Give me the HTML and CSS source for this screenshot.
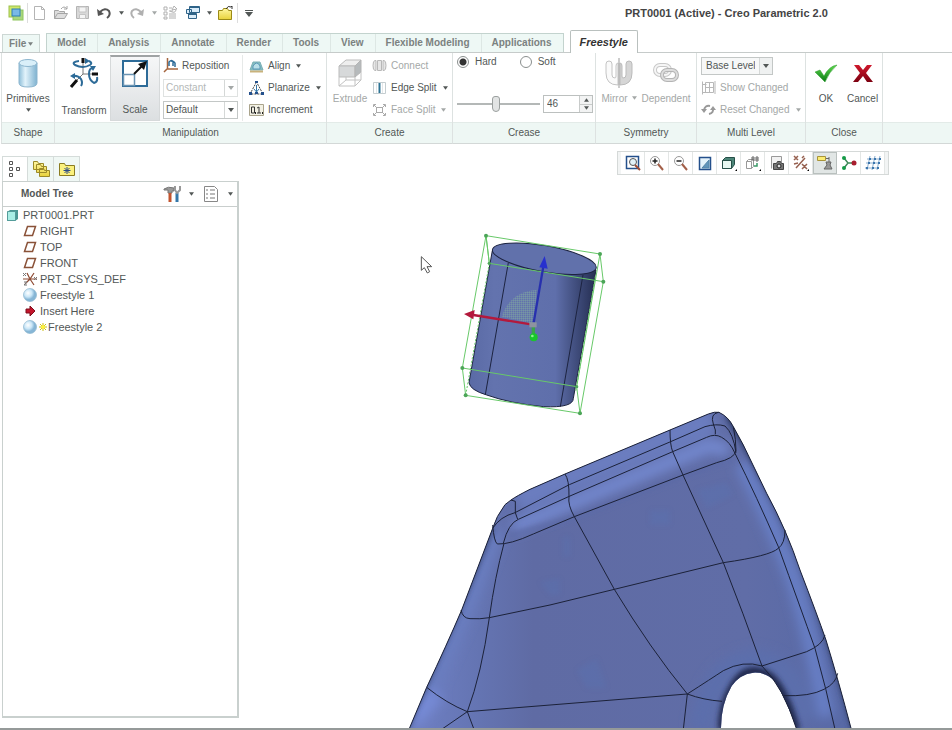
FILE: index.html
```html
<!DOCTYPE html>
<html lang="en">
<head>
<meta charset="utf-8">
<title>PRT0001 (Active) - Creo Parametric 2.0</title>
<link rel="stylesheet" href="styles.css">
</head>
<body>
<svg class="defs" aria-hidden="true">
  <defs>
    <linearGradient id="glass"><stop offset="0" stop-color="#8fbfd9"/><stop offset=".35" stop-color="#e2f3fb"/><stop offset="1" stop-color="#7fb2d0"/></linearGradient>
    <radialGradient id="ball" cx=".35" cy=".35"><stop offset="0" stop-color="#fff"/><stop offset=".6" stop-color="#c9e6f7"/><stop offset="1" stop-color="#86b6d6"/></radialGradient>
    <linearGradient id="folder" x2="0" y2="1"><stop offset="0" stop-color="#fff7a0"/><stop offset="1" stop-color="#e8d23c"/></linearGradient>
    <linearGradient id="tick" x2="0" y2="1"><stop offset="0" stop-color="#5fd84e"/><stop offset="1" stop-color="#087a12"/></linearGradient>
    <linearGradient id="cross" x2="0" y2="1"><stop offset="0" stop-color="#d0182c"/><stop offset="1" stop-color="#7c0010"/></linearGradient>
    <symbol id="caret" viewBox="0 0 6 4"><path d="M0 0h6L3 4z" fill="currentColor"/></symbol>
    <symbol id="plane" viewBox="0 0 14 12"><path d="M4.500 1.500h8l-3 9h-8z" fill="#fff" stroke="#8a5238" stroke-width="1.500"/></symbol>
    <symbol id="sphere" viewBox="0 0 14 14"><circle cx="7" cy="7" r="6.500" fill="url(#ball)" stroke="#8db6cf" stroke-width=".7"/></symbol>
  </defs>
</svg>

<header class="titlebar">
  <nav class="quick" aria-label="Quick access">
    <button aria-label="Application"><svg class="i16" viewBox="0 0 16 16"><rect x="1" y="1" width="11" height="11" fill="#cfe86a" stroke="#9cc04a"/><rect x="5" y="5" width="10" height="10" fill="#a9d77c" stroke="#8fc65f"/><rect x="4" y="4" width="8" height="7" fill="#79b9e6" stroke="#2f7fb4"/></svg></button>
    <i class="rule"></i>
    <button aria-label="New"><svg class="i16" viewBox="0 0 16 16"><path d="M3.500 1.500h7l3 3v10h-10zM10.500 1.500v3h3" fill="#fff" stroke="#b4b4b4"/></svg></button>
    <button aria-label="Open"><svg class="i16" viewBox="0 0 16 16"><path d="M1.500 13.500v-8h4l1 1h5v2M1.500 13.500l3-5h10l-3 5z" fill="#ddd" stroke="#a5a5a5"/><path d="M8 4q3-4 6 0m0-3v3h-3" fill="none" stroke="#a5a5a5"/></svg></button>
    <button aria-label="Save"><svg class="i16" viewBox="0 0 16 16"><path d="M1.500 1.500h12v12h-12z" fill="#d8d8d8" stroke="#b4b4b4"/><path d="M4 2h7v5H4zM4.500 9.500h6v4h-6z" fill="#f4f4f4" stroke="#c4c4c4"/></svg></button>
    <button aria-label="Undo"><svg class="i16" viewBox="0 0 16 16"><path d="M3 7q5-5 9-1 2 4-2 7" fill="none" stroke="#555" stroke-width="2"/><path d="M0 4l1 7 6-2z" fill="#555"/></svg></button>
    <button aria-label="Undo list"><svg class="caret q"><use href="#caret"/></svg></button>
    <button aria-label="Redo"><svg class="i16" viewBox="0 0 16 16"><path d="M11 7Q6 2 2 6q-2 4 2 7" fill="none" stroke="#b0b0b0" stroke-width="2"/><path d="M14 4l-1 7-6-2z" fill="#b0b0b0"/></svg></button>
    <button aria-label="Redo list" class="off"><svg class="caret q"><use href="#caret"/></svg></button>
    <button aria-label="Regenerate"><svg class="i16" viewBox="0 0 16 16"><path d="M1 2h3v3H1zM1 7h3v3H1zM1 12h3v2H1zM6 9h7M6 11h7M6 13h7M6 3h3M7 6q5 3 6-1M6 6h4M11 1l3 3-5 1z" fill="none" stroke="#b0b0b0"/></svg></button>
    <button aria-label="Windows"><svg class="i16" viewBox="0 0 16 16"><path d="M4.500 1.500h10v6h-10zM1.500 4.500h5v4h-5zM3.500 8.500h8v5h-8z" fill="#d9ecfa" stroke="#2e6388"/><path d="M4 2.500h11M3 9.500h9" stroke="#2e6388"/></svg></button>
    <button aria-label="Windows list"><svg class="caret q"><use href="#caret"/></svg></button>
    <button aria-label="Close"><svg class="i16" viewBox="0 0 16 16"><path d="M.5 14.500v-9h4l1-2h4l1 2h3v9z" fill="url(#folder)" stroke="#9b8a16"/><path d="M8 4q2-4 5-2l1-1v3" fill="none" stroke="#333"/></svg></button>
    <i class="rule"></i>
    <button aria-label="Customize" class="more"><svg class="caret w" viewBox="0 0 8 7"><path d="M0 0h8v1H0zM0 2h8L4 7z" fill="currentColor"/></svg></button>
  </nav>
  <h1>PRT0001 (Active) - Creo Parametric 2.0</h1>
</header>

<nav class="tabs" aria-label="Ribbon tabs">
  <button class="file">File <svg class="caret q"><use href="#caret"/></svg></button>
  <div class="tabset">
    <button>Model</button><button>Analysis</button><button>Annotate</button><button>Render</button><button>Tools</button><button>View</button><button>Flexible Modeling</button><button>Applications</button>
  </div>
  <button class="current">Freestyle</button>
</nav>

<main class="ribbon">
  <section class="group">
    <div class="tools center">
      <button class="big"><svg class="i30" viewBox="0 0 30 30"><path d="M6 5v20q0 4 9 4t9-4V5" fill="url(#glass)" stroke="#8db6cf"/><ellipse cx="15" cy="5" rx="9" ry="3.500" fill="#d9eff9" stroke="#8db6cf"/></svg><span>Primitives</span><svg class="caret q"><use href="#caret"/></svg></button>
    </div>
    <h2>Shape</h2>
  </section>

  <section class="group">
    <div class="tools">
      <button class="big low wide"><svg class="i30" viewBox="0 0 30 30"><path d="M14 3v13h13M14 16l-9 9" fill="none" stroke="#777"/><path d="M14 0v5M23 16h6M8 22l-6 7" stroke="#111" stroke-width="3"/><path d="M10 3q-8 1-4 4 8 4 15 0 3-2-1-4M24 10q-4 0-4 6t5 9q4-1 3-6M3 18q6-1 9 3 2 4 0 7" fill="none" stroke="#2d6b98" stroke-width="2"/><path d="M16 0l5 3-5 3zM21 8h6l-3 5zM1 18l5-3v6z" fill="#2d6b98"/></svg><span>Transform</span></button>
      <button class="big low pressed"><svg class="i30" viewBox="0 0 30 30"><path d="M3 3h24v25H3z" fill="#fff" stroke="#2d6b98" stroke-width="2"/><path d="M3.500 16.500h11v11h-11z" fill="#fff" stroke="#6b94b3" stroke-width="1.500"/><path d="M14 16l9-9" stroke="#111" stroke-width="2"/><path d="M27 3l-9 3 6 6z" fill="#111"/></svg><span>Scale</span></button>
      <div class="stack combos">
        <button class="row"><svg class="i16" viewBox="0 0 16 16"><path d="M4.500 0v11H15M4 11l-3 3" fill="none" stroke="#a5653e" stroke-width="1.500"/><path d="M6 8V4q3-3 4 0v4M12 9V5q-1-2-4-2" fill="none" stroke="#2d6b98" stroke-width="1.500"/></svg>Reposition</button>
        <span class="combo off"><select aria-label="Transform mode" disabled><option>Constant</option></select><svg class="caret"><use href="#caret"/></svg></span>
        <span class="combo"><select aria-label="Increment mode"><option>Default</option></select><svg class="caret"><use href="#caret"/></svg></span>
      </div>
      <div class="stack divided">
        <button class="row"><svg class="i16" viewBox="0 0 16 16"><path d="M1 12l3-8h7l3 8z" fill="#86bfc0" stroke="#7bafb6"/><path d="M4 8q4-6 7 0v3H4z" fill="#b9dfe8" stroke="#5b97b8"/><path d="M1 13.500h13" stroke="#c9b27c" stroke-width="2"/></svg>Align <svg class="caret q gap"><use href="#caret"/></svg></button>
        <button class="row"><svg class="i16" viewBox="0 0 16 16"><path d="M7.500 2L1 14h13z" fill="none" stroke="#444" stroke-dasharray="2 1"/><path d="M7.500 5v7M5 9l2.500 3L10 9" fill="none" stroke="#3477a8"/><path d="M6 1h3v2H6zM0 12h3v3H0zM12 12h3v3h-3zM6 12h3v2H6z" fill="#24508c"/></svg>Planarize <svg class="caret q gap"><use href="#caret"/></svg></button>
        <button class="row"><svg class="i16" viewBox="0 0 16 16"><path d="M.5 2.500h14v11H.5z" fill="#f3f1e4" stroke="#aaa48c"/><path d="M2.500 5h3v6h-3zM8 6l2-1v6M8 11h4" fill="none" stroke="#333"/><path d="M6 10h1v2H6zM13 10h1v2h-1z" fill="#222"/></svg>Increment</button>
      </div>
    </div>
    <h2>Manipulation</h2>
  </section>

  <section class="group">
    <div class="tools">
      <button class="big off extrude" disabled><svg class="i30" viewBox="0 0 30 30"><path d="M4 8l7-6h15l-6 6z" fill="#eee" stroke="#bbb"/><path d="M4 8h16v11H4z" fill="#d7d9da" stroke="#bbb"/><path d="M20 8l6-6v12l-6 5z" fill="#b6babc" stroke="#b4b4b4"/><path d="M4 19v9h16v-9M20 28l6-6v-8M4 28l7-6h15M11 22v-3" fill="none" stroke="#c2c2c2"/></svg><span>Extrude</span></button>
      <div class="stack inset">
        <button class="row off" disabled><svg class="i16" viewBox="0 0 16 16"><path d="M4 2.500H3q-2 0-2 5t2 5h1zM11 2.500h1q2 0 2 5t-2 5h-1zM5.500 2.500h4v10h-4z" fill="#e6e6e6" stroke="#b8b8b8"/></svg>Connect</button>
        <button class="row"><svg class="i16" viewBox="0 0 16 16"><path d="M1.500 2.500h12v11h-12z" fill="#fff" stroke="#c4cdd0"/><path d="M4.500 3v10M10.500 3v10" stroke="#e3e7e9"/><path d="M7.500 3v10" stroke="#2d7394" stroke-width="2"/></svg>Edge Split <svg class="caret q gap"><use href="#caret"/></svg></button>
        <button class="row off" disabled><svg class="i16" viewBox="0 0 16 16"><path d="M4.500 5.500h6v5h-6zM2 3l3 3M13 3l-3 3M2 13l3-3M13 13l-3-3M1.500 5V2.500H4M11 2.500h2.500V5M1.500 11v2.500H4M11 13.500h2.500V11" fill="none" stroke="#aaa"/></svg>Face Split <svg class="caret q gap"><use href="#caret"/></svg></button>
      </div>
    </div>
    <h2>Create</h2>
  </section>

  <section class="group">
    <div class="tools crease">
      <div class="radios"><label><input type="radio" name="crease" checked>Hard</label><label><input type="radio" name="crease">Soft</label></div>
      <div class="amount">
        <input type="range" aria-label="Crease amount" min="0" max="100" value="46">
        <span class="spin"><input type="text" aria-label="Crease value" value="46"><span class="steps"><button aria-label="Increase"><svg class="caret tiny flip"><use href="#caret"/></svg></button><button aria-label="Decrease"><svg class="caret tiny"><use href="#caret"/></svg></button></span></span>
      </div>
    </div>
    <h2>Crease</h2>
  </section>

  <section class="group">
    <div class="tools pair">
      <button class="big off" disabled><svg class="i30" viewBox="0 0 30 30"><path d="M14 21v6Q2 27 2 15V6q0-3 3-3t3 3v11q0 3 3 3 1 0 1-2V8q0-3 2-3z" fill="#fafafa" stroke="#c4c4c4"/><path d="M16 21v6q12 0 12-12V6q0-3-3-3t-3 3v11q0 3-3 3-1 0-1-2V8q0-3-2-3z" fill="#d6d6d6" stroke="#bbb"/><path d="M15 0v30" stroke="#999"/></svg><span>Mirror <svg class="caret q"><use href="#caret"/></svg></span></button>
      <button class="big off" disabled><svg class="i30" viewBox="0 0 30 30"><rect x="4" y="7" width="15" height="10" rx="5" fill="none" stroke="#c8c8c8" stroke-width="4"/><rect x="4" y="7" width="15" height="10" rx="5" fill="none" stroke="#f6f6f6" stroke-width="2"/><rect x="11" y="12" width="15" height="10" rx="5" fill="none" stroke="#b4b4b4" stroke-width="4"/><rect x="11" y="12" width="15" height="10" rx="5" fill="none" stroke="#ddd" stroke-width="2"/></svg><span>Dependent</span></button>
    </div>
    <h2>Symmetry</h2>
  </section>

  <section class="group">
    <div class="tools level">
      <div class="stack">
        <span class="combo level-combo"><select aria-label="Level"><option>Base Level</option></select><svg class="caret"><use href="#caret"/></svg></span>
        <button class="row off" disabled><svg class="i16" viewBox="0 0 16 16"><path d="M1.500 1.500v13M1.500 4.500h4M1.500 12.500h4M4.500 2.500h8v10h-8zM4.500 7.500h8M8.500 2.500v10M14 1v13" fill="none" stroke="#b8b8b8"/></svg>Show Changed</button>
        <button class="row off" disabled><svg class="i16" viewBox="0 0 16 16"><path d="M3 8q1-5 6-4M12 6q1 5-4 6" fill="none" stroke="#999" stroke-width="2"/><path d="M0 7h6l-3 4zM15 8H9l3-4z" fill="#999"/></svg>Reset Changed <svg class="caret q gap"><use href="#caret"/></svg></button>
      </div>
    </div>
    <h2>Multi Level</h2>
  </section>

  <section class="group">
    <div class="tools close">
      <button class="big"><svg class="i30" viewBox="0 0 30 30"><path d="M4 14l5-2 4 6Q18 8 26 7 18 14 14 24z" fill="url(#tick)" stroke="#2b9a2b" stroke-width=".5"/></svg><span>OK</span></button>
      <button class="big"><svg class="i30" viewBox="0 0 30 30"><path d="M6 7h5l4 5 4-5h5l-6 8 7 9h-6l-4-6-5 6H5l7-9z" fill="url(#cross)"/></svg><span>Cancel</span></button>
    </div>
    <h2>Close</h2>
  </section>
  <section class="group rest"><div class="tools"></div><div class="band"></div></section>
</main>

<div class="workspace">
  <aside class="side">
    <nav class="side-tabs" aria-label="Navigator">
      <button class="on" aria-label="Model tree"><svg class="i18" viewBox="0 0 18 18"><path d="M3.500 1.500h3v3h-3zM3.500 7.500h3v3h-3zM3.500 13.500h3v3h-3zM10.500 7.500h3v3h-3z" fill="#fff" stroke="#555"/></svg></button>
      <button aria-label="Folders"><svg class="i18" viewBox="0 0 18 18"><path d="M1.500 9.500v-8h4l1 2h5v6zM4.500 12.500v-8h4l1 2h5v6zM7.500 16.500v-8h4l1 2h5v6z" fill="url(#folder)" stroke="#9b8a28"/></svg></button>
      <button aria-label="Favorites"><svg class="i18" viewBox="0 0 18 18"><path d="M1.500 15.500v-12h5l1 2h9v10z" fill="#fbf17d" stroke="#8b7c22"/><path d="M9 7v7M5.500 10.500h7M6.500 8l5 5M11.500 8l-5 5" stroke="#2b4b86"/></svg></button>
    </nav>
    <div class="panel">
      <div class="panel-head">
        <h2>Model Tree</h2>
        <button aria-label="Settings"><svg class="i18" viewBox="0 0 18 18"><path d="M1 4q4-3 10-1v3H9v2H5V5H1z" fill="#999" stroke="#777"/><path d="M7 8v9" stroke="#c2542e" stroke-width="3"/><path d="M14 8v9" stroke="#3477a8" stroke-width="3"/><path d="M12 1v4l2 3 3-3V1" fill="none" stroke="#999" stroke-width="2"/></svg></button>
        <svg class="caret tiny"><use href="#caret"/></svg>
        <button aria-label="Show"><svg class="i18" viewBox="0 0 18 18"><path d="M2.500 1.500h10l3 3v12h-13z" fill="#fff" stroke="#888"/><path d="M4 5h2M8 5h5M4 9h2M8 9h5M4 13h2M8 13h5" stroke="#777"/></svg></button>
        <svg class="caret tiny"><use href="#caret"/></svg>
      </div>
      <ul class="tree">
        <li class="root"><svg class="i14" viewBox="0 0 14 14"><path d="M1 4l3-2h8v9l-3 2H1z" fill="#4b9793"/><path d="M1.500 3.500h8v9h-8z" fill="#a9eee5" stroke="#549c9a"/></svg>PRT0001.PRT</li>
        <li><svg class="i14"><use href="#plane"/></svg>RIGHT</li>
        <li><svg class="i14"><use href="#plane"/></svg>TOP</li>
        <li><svg class="i14"><use href="#plane"/></svg>FRONT</li>
        <li><svg class="i14" viewBox="0 0 14 14"><path d="M4 1l3 6 4-6M7 7h7M7 7l-5 5M7 7l4 6M0 7h6" fill="none" stroke="#8d4a33" stroke-width="1.200"/><path d="M0 1l3 3M3 1L0 4M11 5l3 3M14 5l-3 3M1 10h3l-3 3h3" fill="none" stroke="#777"/></svg>PRT_CSYS_DEF</li>
        <li><svg class="i14"><use href="#sphere"/></svg>Freestyle 1</li>
        <li><svg class="i14" viewBox="0 0 14 14"><path d="M3 5h4V2l5 5-5 5V9H3z" fill="#c4152b" stroke="#7f0d1c"/></svg>Insert Here</li>
        <li><svg class="i14"><use href="#sphere"/></svg><svg class="star" viewBox="0 0 8 8"><path d="M4 0v8M0 4h8M1 1l6 6M7 1L1 7" stroke="#c9bc16"/><circle cx="4" cy="4" r="2" fill="#fff33c"/></svg>Freestyle 2</li>
      </ul>
    </div>
  </aside>

  <section class="view" aria-label="Graphics area">
    <svg class="scene" viewBox="240 144 712 584" role="img" aria-label="Freestyle model">
      <defs>
        <linearGradient id="skin" x1="0" y1="0" x2="1" y2="0"><stop offset="0" stop-color="#6f80c4"/><stop offset=".16" stop-color="#6474b2"/><stop offset=".28" stop-color="#5f6ba4"/><stop offset=".76" stop-color="#606da7"/><stop offset="1" stop-color="#5769a6"/></linearGradient>
        <linearGradient id="barrel"><stop offset="0" stop-color="#5a6aa5"/><stop offset=".2" stop-color="#6373ae"/><stop offset=".68" stop-color="#5f6fab"/><stop offset=".85" stop-color="#3f4c7b"/><stop offset="1" stop-color="#252e52"/></linearGradient>
        <filter id="soft" x="-20%" y="-20%" width="140%" height="140%"><feGaussianBlur stdDeviation="16"/></filter>
        <filter id="softer" x="-20%" y="-20%" width="140%" height="140%"><feGaussianBlur stdDeviation="8"/></filter>
        <path id="body" d="M27 988L80 862Q140 735 185 630L278 385Q288 350 315 314L333 300Q350 288 390 268L495 222 810 90 925 42Q945 34 957 37 985 50 1000 80L1030 135 1100 280Q1160 390 1200 510 1250 640 1278 720 1315 840 1354 988H1190Q1160 900 1125 845 1100 816 1060 818 1020 822 995 858 962 915 963 988z"/>
        <clipPath id="bodyclip"><use href="#body"/></clipPath>
        <pattern id="mesh" width="6" height="6" patternUnits="userSpaceOnUse"><path d="M0 0h6v6" fill="#7d9ba8" stroke="#668c9c"/></pattern>
      </defs>
      <g transform="translate(400 400) scale(.3333333)">
        <use href="#body" fill="url(#skin)"/>
        <g clip-path="url(#bodyclip)" fill="none">
          <g filter="url(#soft)">
            <path d="M350 300L500 235 940 55" stroke="#6a7dbf" stroke-width="80"/>
            <path d="M340 382L520 308 930 137 985 150" stroke="#7388cf" stroke-width="40"/>
            <path d="M290 390L210 600 50 960" stroke="#697dbf" stroke-width="50"/>
            <path d="M1025 190Q1130 400 1180 540 1230 700 1280 950" stroke="#687fc6" stroke-width="44"/>
            <path d="M900 988Q930 800 1060 780 1180 790 1220 960" stroke="#5c6eac" stroke-width="70"/>
            <path d="M40 960L110 880" stroke="#768ad6" stroke-width="50"/>
          </g>
          <g filter="url(#softer)">
            <path d="M985 45Q1145 310 1216 500T1366 990" stroke="#35436f" stroke-width="26"/>
            <path d="M967 988Q969 910 1000 862 1026 815 1060 815 1105 815 1130 855 1162 900 1187 990" stroke="#202b50" stroke-width="28"/>
            <path d="M20 988L180 625 278 385" stroke="#35436f" stroke-width="10"/>
            <path d="M330 405L520 355 850 228 1000 177" stroke="#5a69a6" stroke-width="10"/>
          </g>
          <g fill="#5975b5" opacity=".3" filter="url(#softer)"><path d="M890 270l90-25 20 40-80 40zM750 330h60v45h-60zM490 410h20v60h-20zM420 545l60-10v50h-30zM530 810l60-35 30 90h-60z"/></g>
        </g>
        <g fill="none" stroke="#1b2138" stroke-width="3" stroke-linejoin="round">
          <path d="M27 988L80 862Q140 735 185 630L278 385Q288 350 315 314L333 300Q350 288 390 268L495 222 810 90 925 42Q945 34 957 37 985 50 1000 80L1030 135 1100 280Q1160 390 1200 510 1250 640 1278 720 1315 840 1354 988"/>
          <path d="M278 385Q300 350 345 338L508 254 812 125 915 80Q950 70 975 78 1000 100 1008 158"/>
          <path d="M310 430Q325 370 355 358L510 288 818 155 920 112Q945 100 965 112 990 125 1005 160 1070 290 1135 440 1200 620 1245 745 1280 870 1305 988"/>
          <path d="M278 375Q282 425 292 432 330 434 400 402L523 350 849 225 950 188Q1005 175 1008 152 1008 120 1000 80"/>
          <path d="M333 300L346 304 346 338 353 358"/>
          <path d="M495 222Q508 240 507 290 503 315 523 350L643 568Q750 745 862 882"/>
          <path d="M810 90Q810 135 818 155L849 225 970 488Q1030 640 1086 798"/>
          <path d="M955 37Q930 42 940 72L946 90V103"/>
          <path d="M183 630Q188 655 210 656 240 658 268 653L450 615 643 568 970 488Q1110 468 1135 445 1155 430 1155 390"/>
          <path d="M312 430Q285 530 268 653 245 820 202 935"/>
          <path d="M80 862Q140 910 202 935L862 882Q910 900 966 904M125 988L202 935 222 988M862 882L850 988M862 882Q935 835 970 812 1030 780 1086 798L1220 755Q1268 735 1275 705M1150 887Q1230 890 1272 868 1308 850 1313 820M1086 798Q1150 860 1190 988"/>
        </g>
      </g>
      <g transform="translate(410 220) scale(.3333333)">
        <path d="M247 92L177 488Q180 510 230 525 300 550 400 560 490 564 490 535L558 150z" fill="url(#barrel)" stroke="#1c2340" stroke-width="3"/>
        <ellipse cx="403" cy="116" rx="158" ry="39" transform="rotate(10 403 116)" fill="#6171ab" stroke="#1c2340" stroke-width="3"/>
        <path d="M295 128L226 524M519 165L451 560" stroke="#1c2340" stroke-width="3"/>
        <path d="M275 290Q300 215 380 210L372 312z" fill="url(#mesh)"/>
        <g fill="none" stroke="#67c968" stroke-width="3"><path d="M228 47L570 102 580 185 238 130zM157 444L500 500 510 580 167 526zM228 47L157 444M228 47L238 130M570 102L500 500M580 185L510 580"/><path d="M238 130L167 526M556 170L497 515" stroke-dasharray="6 5"/></g>
        <g fill="#4ca558"><circle cx="228" cy="47" r="6"/><circle cx="570" cy="102" r="6"/><circle cx="580" cy="185" r="6"/><circle cx="238" cy="130" r="5"/><circle cx="157" cy="444" r="6"/><circle cx="500" cy="500" r="5"/><circle cx="510" cy="580" r="6"/><circle cx="167" cy="526" r="6"/></g>
        <path d="M368 314L190 285" stroke="#b3193c" stroke-width="7"/><path d="M162 282l32-12-4 28z" fill="#b3193c"/>
        <path d="M371 308L400 140" stroke="#2730ae" stroke-width="7"/><path d="M404 108l-16 34 25 4z" fill="#2730ce"/>
        <path d="M370 314v36" stroke="#3aa34a" stroke-width="10"/><path d="M358 307h22v15h-22z" fill="#8d93a0"/><circle cx="371" cy="352" r="12" fill="#18c62c"/><circle cx="367" cy="348" r="4" fill="#8bf08f"/>
        <path d="M34 110v41l9-8 9 16 7-4-8-15h14z" fill="#fff" stroke="#555" stroke-width="3"/>
      </g>
    </svg>
    <div class="viewbar">
      <button aria-label="Refit"><svg class="i16" viewBox="0 0 16 16"><path d="M1.500 1.500h12v12h-12z" fill="#fff" stroke="#24508c" stroke-width="1.500"/><circle cx="8" cy="7" r="3.500" fill="#e3f1f8" stroke="#555"/><path d="M10 10l5 5" stroke="#9b4b36" stroke-width="2"/></svg></button>
      <button aria-label="Zoom in"><svg class="i16" viewBox="0 0 16 16"><circle cx="6" cy="6" r="4.500" fill="#fff" stroke="#999"/><path d="M3.500 6h5M6 3.500v5" stroke="#222" stroke-width="1.500"/><path d="M9 9l5 6" stroke="#a35f48" stroke-width="2"/></svg></button>
      <button aria-label="Zoom out"><svg class="i16" viewBox="0 0 16 16"><circle cx="6" cy="6" r="4.500" fill="#fff" stroke="#999"/><path d="M3.500 6h5" stroke="#222" stroke-width="1.500"/><path d="M9 9l5 6" stroke="#a35f48" stroke-width="2"/></svg></button>
      <button aria-label="Repaint"><svg class="i16" viewBox="0 0 16 16"><path d="M2.500 2.500h11v12h-11z" fill="#e4f2fa" stroke="#24508c" stroke-width="1.500"/><path d="M12 5l-7 8h7z" fill="#6094b9" stroke="#5585a8"/></svg></button>
      <button aria-label="Display style"><svg class="i16" viewBox="0 0 16 16"><path d="M1.500 5.500l3-3h9v7l-3 4h-9z" fill="#4c8578" stroke="#264f47"/><path d="M1.500 5.500h9v8h-9z" fill="#e7f7f1" stroke="#264f47"/><path d="M16 14v2h-2z"/></svg></button>
      <button aria-label="Saved orientations"><svg class="i16" viewBox="0 0 16 16"><path d="M1.500 6.500l2-2h5v7l-2 2h-5zM1.500 6.500h5v7" fill="#fff" stroke="#999"/><path d="M7 6V2h2v4M7 4h2M11 2h2v4h-2zM11 4h2" fill="none" stroke="#666"/><path d="M12 8v3h-3" fill="none" stroke="#3a9b68" stroke-width="1.500"/><path d="M16 14v2h-2z"/></svg></button>
      <button aria-label="View manager"><svg class="i16" viewBox="0 0 16 16"><path d="M2.500 13.500v-12h10v6" fill="#f2f2f2" stroke="#999"/><path d="M4.500 8.500h3l1-2h3l1 2h2v6h-10z" fill="#777" stroke="#444"/><circle cx="10" cy="11" r="2" fill="#ddd" stroke="#222"/></svg></button>
      <button aria-label="Datum display"><svg class="i16" viewBox="0 0 16 16"><path d="M1 1l4 4M5 1L1 5M9 9l5 5M14 9l-5 5M3 13l9-10M1 9l4-1M9 3l2-2" stroke="#96604f" stroke-width="1.500"/><path d="M16 14v2h-2z"/></svg></button>
      <button aria-label="Annotation display" class="on"><svg class="i16" viewBox="0 0 16 16"><path d="M.5 1.500h8v4h-8z" fill="#fbec73" stroke="#a8943a"/><path d="M9 3.500h3M12 2v5" stroke="#666"/><path d="M9 7h5l-1 3 2 4H7l3-4z" fill="#999" stroke="#666"/></svg></button>
      <button aria-label="Spin center"><svg class="i16" viewBox="0 0 16 16"><path d="M3 3l4 5-4 5M7 8h6" fill="none" stroke="#3f8a5a" stroke-width="1.500"/><circle cx="3" cy="3" r="2" fill="#159a47"/><circle cx="3" cy="13" r="2" fill="#159a47"/><circle cx="13" cy="8" r="2.500" fill="#a81d2e"/></svg></button>
      <button aria-label="Mesh display"><svg class="i16" viewBox="0 0 16 16"><path d="M5 1L2 15M10 1L7 15M15 1l-3 14M2 4h13M1 8h13M0 13h13" fill="none" stroke="#8aaed0"/><path d="M4 3h2v2H4zM9 3h2v2H9zM14 3h2v2h-2zM3 7h2v2H3zM8 7h2v2H8zM13 7h2v2h-2zM1 12h2v2H1zM7 12h2v2H7zM12 12h2v2h-2z" fill="#3b75ac"/></svg></button>
    </div>
  </section>
</div>
</body>
</html>
```
FILE: styles.css
```css
* { box-sizing: border-box; }

body {
  margin: 0;
  min-height: 100vh;
  display: flex;
  flex-direction: column;
  background: #fff;
  color: #525756;
  font: 10px/14px "Liberation Sans", sans-serif;
  border-bottom: 2px solid #959a99;
}

button {
  display: flex;
  align-items: center;
  margin: 0;
  padding: 0;
  border: 0;
  background: none;
  color: inherit;
  font: inherit;
  white-space: nowrap;
}

h1, h2, ul { margin: 0; padding: 0; }
svg { display: block; flex: none; }

.defs { position: absolute; width: 0; height: 0; }
.i14 { width: 14px; height: 14px; }
.i16 { width: 16px; height: 16px; }
.i18 { width: 18px; height: 18px; }
.i30 { width: 30px; height: 30px; }
.caret { width: 6px; height: 4px; }
.caret.q { width: 5px; }
.caret.w { width: 8px; height: 7px; }
.caret.tiny { width: 5px; height: 4px; }
.caret.flip { transform: rotate(180deg); }
.caret.gap { margin-left: 3px; }
.off { color: #a4a8a7; }

.titlebar { display: flex; align-items: center; height: 26px; }
.quick { display: flex; align-items: center; gap: 6px; padding-left: 8px; flex: 2; }
.rule { width: 1px; height: 20px; margin: 0 -3px; background: #ddd; }
.more { padding-left: 4px; }
.titlebar h1 { flex: 3; text-align: center; padding-left: 192px; font-size: 11px; color: #444; }

.tabs {
  display: flex;
  align-items: flex-end;
  height: 27px;
  padding-left: 2px;
  border-bottom: 1px solid #c6cbca;
  font-weight: bold;
  color: #7b8180;
}
.tabs button { justify-content: center; height: 18px; padding: 0 11px 0 10px; border-right: 1px solid #dde7e4; }
.tabs .file { gap: 2px; padding: 0 6px; margin-right: 6px; background: #eef8f5; border: 1px solid #cdd7d4; border-bottom: 0; }
.tabset { display: flex; background: #eef8f5; border: 1px solid #c3d3ce; border-bottom: 0; }
.tabset button:last-child { border-right: 0; }
.tabs .current {
  height: 23px;
  margin: 0 0 -1px 6px;
  padding: 0 9px;
  border: 1px solid #b9c0be;
  border-bottom: 0;
  border-radius: 2px 2px 0 0;
  background: #fff;
  color: #333;
  font-size: 11px;
  font-style: italic;
}

.ribbon { display: grid; grid-template-columns: 54px 272px 126px 143px 101px 109px 77px 1fr; padding-left: 1px; }
.group { display: flex; flex-direction: column; border-right: 1px solid #dde2e1; border-bottom: 1px solid #d3d8d7; }
.group:first-child { border-left: 1px solid #dde2e1; }
.group.rest { border-right: 0; }
.group h2, .band {
  height: 21px;
  background: #eef7f4;
  border-top: 1px solid #e3ebe8;
  font-size: 10px;
  line-height: 20px;
  font-weight: normal;
  text-align: center;
}
.tools { display: flex; height: 69px; padding: 2px 3px 1px; }
.tools.center { justify-content: center; }
.tools.pair { justify-content: space-around; }
.tools.close { padding-left: 5px; gap: 6px; }
.big { flex-direction: column; align-items: center; padding-top: 3px; gap: 4px; }
.big .caret { margin-top: -2px; }
.big span { display: flex; align-items: center; gap: 4px; }
.big.low { justify-content: space-between; padding-bottom: 3px; }
.big.wide { width: 52px; }
.big.pressed { width: 50px; border: 1px solid #d6d9da; border-top: 2px solid #9fa3a4; background: linear-gradient(#f6f7f8, #dcdfe1); padding-top: 1px; }
.big.extrude { width: 40px; }

.stack { display: grid; grid-template-rows: repeat(3, 22px); align-items: center; }
.stack.inset { padding-left: 2px; }
.row { gap: 3px; }
.combos { width: 82px; padding: 0 4px 0 3px; }
.divided { padding-left: 6px; border-left: 1px solid #e6e9e8; }
.combo { display: grid; grid-template-columns: 1fr 12px; align-items: center; justify-items: center; height: 18px; border: 1px solid #c3c7c6; }
.combo.off { border-color: #dfe2e1; }
.combo select {
  appearance: none;
  width: 100%;
  height: 16px;
  margin: 0;
  padding: 0 2px;
  border: 0;
  border-right: 1px solid #d5d8d7;
  border-radius: 0;
  background: #fff;
  color: inherit;
  opacity: 1;
  font: inherit;
}
.combo.off select { color: #b4b8b7; }
.level-combo { width: 72px; background: #eff1f1; }
.level-combo select { background: #f7f8f8; padding: 0 4px; }

.crease { flex-direction: column; justify-content: space-between; padding: 2px 2px 9px 4px; }
.radios { display: flex; gap: 23px; }
.radios label { display: flex; align-items: center; gap: 6px; }
.radios input { appearance: none; width: 12px; height: 12px; margin: 0; border: 1px solid #8a8f8e; border-radius: 50%; background: #fff; }
.radios input:checked { background: radial-gradient(circle, #333 0 3px, #fff 4px); }
.amount { display: flex; align-items: center; gap: 3px; }
.amount input[type="range"] { appearance: none; flex: 1; min-width: 0; height: 18px; margin: 0; background: linear-gradient(#b4b8b7, #b4b8b7) center / 100% 2px no-repeat; }
.amount input[type="range"]::-webkit-slider-thumb { appearance: none; width: 8px; height: 16px; border: 1px solid #9ba09f; border-radius: 3px 3px 4px 4px; background: #e2e4e4; }
.spin { display: flex; width: 50px; height: 18px; border: 1px solid #bcc0bf; }
.spin input { width: 35px; min-width: 0; padding: 0 3px; border: 0; background: #fff; color: inherit; font: inherit; }
.steps { display: grid; flex: 1; border-left: 1px solid #c8cbca; }
.steps button { justify-content: center; background: #f2f3f3; }
.steps button + button { border-top: 1px solid #c8cbca; }
.level { padding-left: 4px; }

.workspace { flex: 1; display: grid; grid-template-columns: 240px 1fr; }
.side { display: flex; flex-direction: column; padding: 12px 1px 10px 2px; }
.side-tabs { display: flex; }
.side-tabs button { justify-content: center; width: 26px; height: 25px; border: 1px solid #d5dcda; border-left: 0; border-bottom: 0; background: #f0f8f5; }
.side-tabs .on { border-left: 1px solid #d5dcda; background: #fff; }
.panel { flex: 1; border: 1px solid #c9d0ce; border-width: 1px 2px 2px 1px; }
.panel-head { display: flex; align-items: center; gap: 8px; height: 25px; padding: 0 4px 0 18px; border-bottom: 1px solid #c9cecd; }
.panel-head h2 { flex: 1; font-size: 10px; }
.tree { list-style: none; font-size: 11px; line-height: 16px; }
.tree li { display: flex; align-items: center; gap: 3px; padding-left: 20px; }
.tree .root { padding-left: 3px; }
.star { width: 8px; height: 8px; margin: 0 -2px 0 -1px; }

.view { position: relative; }
.scene { width: 100%; height: auto; }
.viewbar {
  position: absolute;
  top: 7px;
  right: 63px;
  display: flex;
  padding: 0 3px;
  border: 1px solid #d5d9d8;
  background: #f2f4f4;
}
.viewbar button { justify-content: center; width: 24px; height: 22px; background: #fff; border-right: 1px solid #e3e6e5; }
.viewbar .on { background: #e1e6e5; outline: 1px solid #b9c0be; outline-offset: -1px; }
```
